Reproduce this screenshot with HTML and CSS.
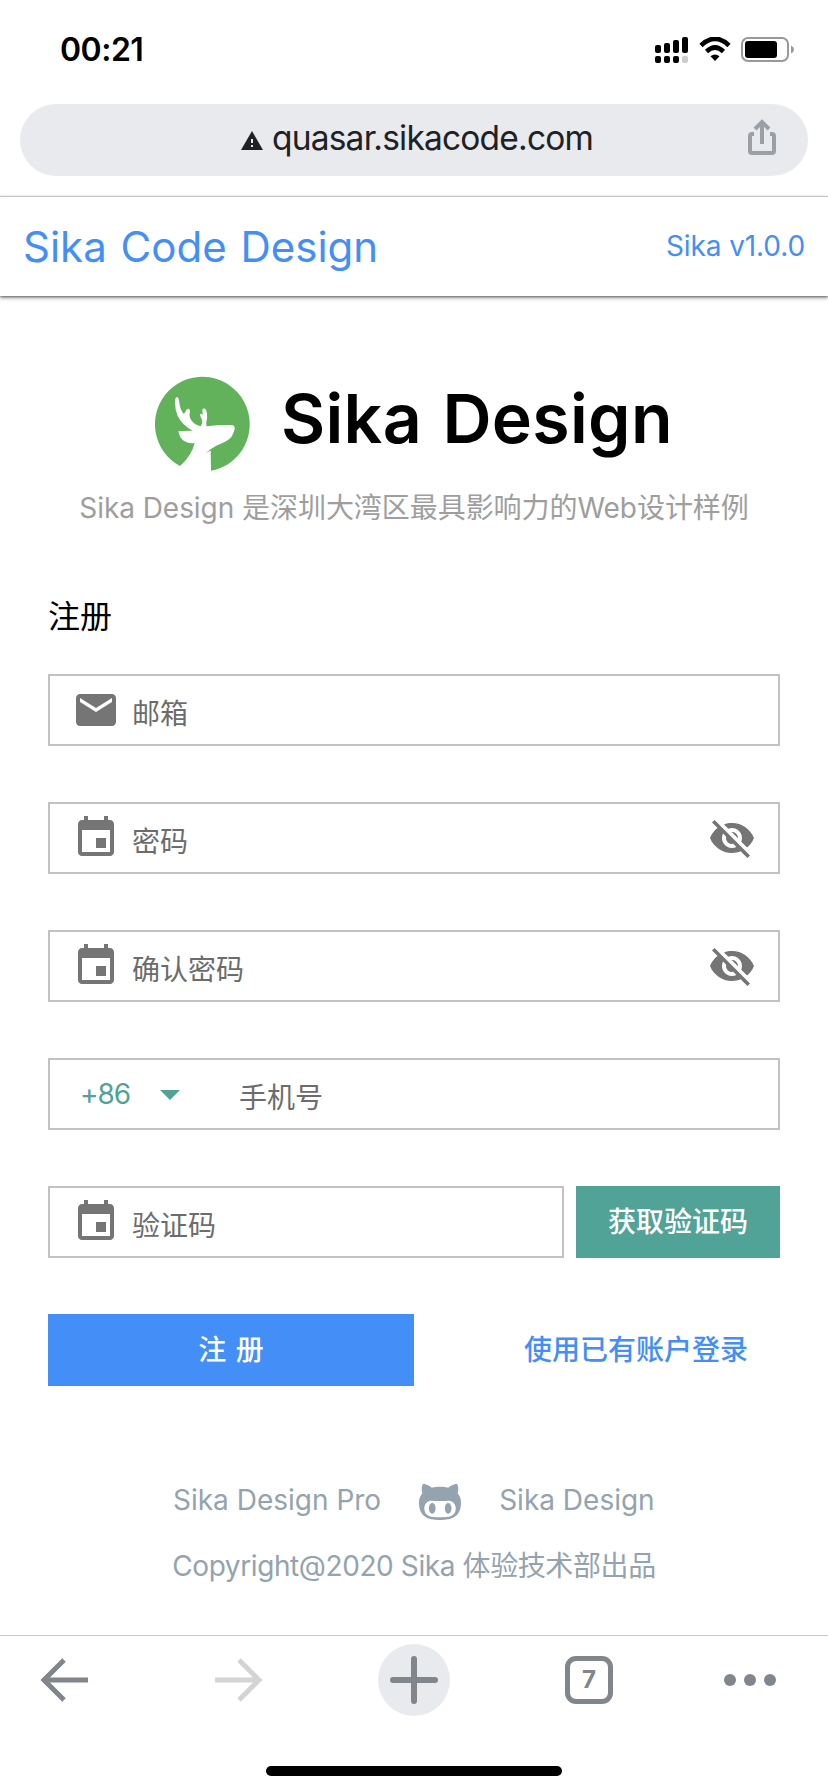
FILE: index.html
```html
<!DOCTYPE html>
<html lang="zh-CN">
<head>
<meta charset="utf-8">
<title>Sika Design</title>
<link rel="stylesheet" href="styles.css">
</head>
<body>
<svg class="defs" width="0" height="0">
  <symbol id="event" viewBox="0 0 24 24"><path d="M17 12h-5v5h5v-5zM16 1v2H8V1H6v2H5c-1.11 0-1.99.9-1.99 2L3 19c0 1.100.89 2 2 2h14c1.100 0 2-.9 2-2V5c0-1.100-.9-2-2-2h-1V1h-2zm3 18H5V8h14v11z"/></symbol>
  <symbol id="eye-off" viewBox="0 0 24 24"><path d="M12 7c2.76 0 5 2.24 5 5 0 .65-.13 1.26-.36 1.83l2.92 2.92c1.51-1.26 2.7-2.89 3.43-4.75-1.73-4.39-6-7.5-11-7.5-1.4 0-2.74.25-3.98.7l2.16 2.16C10.74 7.13 11.35 7 12 7zM2 4.27l2.28 2.28.46.46C3.08 8.3 1.78 10.02 1 12c1.73 4.39 6 7.5 11 7.5 1.55 0 3.03-.3 4.38-.84l.42.42L19.73 22 21 20.73 3.27 3 2 4.27zM7.53 9.8l1.55 1.55c-.05.21-.08.43-.08.65 0 1.66 1.34 3 3 3 .22 0 .44-.03.65-.08l1.55 1.55c-.67.33-1.41.53-2.2.53-2.76 0-5-2.24-5-5 0-.79.2-1.53.53-2.2zm4.31-.78l3.15 3.15.02-.16c0-1.66-1.34-3-3-3l-.17.01z"/></symbol>
</svg>

<div class="status">
  <span class="time">00:21</span>
  <div class="status-icons">
    <svg width="33" height="26" viewBox="0 0 33 26">
      <rect y="8" width="6" height="8" rx="2"/><rect x="9" y="6" width="6" height="10" rx="2"/><rect x="18" y="3" width="6" height="13" rx="2"/><rect x="27" width="6" height="16" rx="2"/>
      <rect y="19" width="6" height="7" rx="2"/><rect x="9" y="19" width="6" height="7" rx="2"/><rect x="18" y="19" width="6" height="7" rx="2"/><rect x="27" y="19" width="6" height="7" rx="2" fill="#ccc"/>
    </svg>
    <svg class="wifi" width="32" height="25" viewBox="0 0 32 25">
      <path d="M2 8.5Q16-5 30 8.500M7.500 14.500Q16 6.500 24.500 14.500" fill="none" stroke="#000" stroke-width="4.600"/>
      <path d="M16 24l-4.500-4.800q4.500-3.600 9 0z"/>
    </svg>
    <svg class="battery" width="53" height="25" viewBox="0 0 53 25">
      <rect x="1" y="1" width="46" height="23" rx="6" fill="#fff" stroke="#999" stroke-width="2"/>
      <rect x="4" y="4" width="32" height="17" rx="3"/><path d="M50 8.500q3 1.500 3 4t-3 4z" fill="#999"/>
    </svg>
  </div>
</div>

<div class="address">
  <div class="pill">
    <svg class="warn" width="22" height="19" viewBox="0 0 22 19"><path d="M11 0l11 19H0z" fill="#202124"/><path d="M10 8h2v4h-2zM10 14h2v2h-2z" fill="#e8eaed"/></svg>
    <span class="url">quasar.sikacode.com</span>
    <svg class="share" width="28" height="37" viewBox="0 0 28 37"><path d="M6 15H4a2 2 0 0 0-2 2v15a2 2 0 0 0 2 2h20a2 2 0 0 0 2-2V17a2 2 0 0 0-2-2h-2M14 25V4M7 10l7-7 7 7" fill="none" stroke="#9aa0a6" stroke-width="4"/></svg>
  </div>
</div>

<header class="toolbar">
  <span class="brand">Sika Code Design</span>
  <span class="version">Sika v1.0.0</span>
</header>

<main class="page">
  <div class="hero">
    <svg class="logo" width="96" height="96" viewBox="0 0 96 96">
      <path d="M25 90A47.400 47.400 0 1 1 56 94.800L55.700 74.500L51 77Q55 73 61.700 69.500Q72 65.500 76 61.500Q79.500 56 79.700 52Q79.500 49.500 77.500 49Q64 48.500 51.500 50.300Q50.800 46 52 43Q52.500 34.500 50 32.700Q48 31.800 47.300 33.700L47.800 39Q46.300 37 45 38.300Q45 40 46.800 43.500Q48 48 45.700 50.300Q39 48.500 36.500 44.500Q34.200 41 34.500 38.500Q35.800 33.500 33.700 32.700Q31.500 32.500 30 36.500L28.300 37.700Q25 33 24.500 28Q24 21 22 21Q20 21.500 20 26Q20 34 22.700 40Q27 49 37.700 54.700Q30 54.500 23.300 55.300Q25.500 65.500 33 66.700Q36 67.500 39.700 67Q36.500 80 25 90Z" fill="#61b25a"/>
    </svg>
    <h1 class="title">Sika Design</h1>
  </div>
  <p class="subtitle">Sika Design 是深圳大湾区最具影响力的Web设计样例</p>

  <form class="form">
    <h2 class="form-title">注册</h2>
    <div class="field"><svg class="icon" viewBox="0 0 24 24"><path d="M20 4H4c-1.100 0-1.990.9-1.990 2L2 18c0 1.100.9 2 2 2h16c1.100 0 2-.9 2-2V6c0-1.100-.9-2-2-2zm0 4l-8 5-8-5V6l8 5 8-5v2z"/></svg><span class="label">邮箱</span></div>
    <div class="field"><svg class="icon"><use href="#event"/></svg><span class="label">密码</span><svg class="icon eye"><use href="#eye-off"/></svg></div>
    <div class="field"><svg class="icon"><use href="#event"/></svg><span class="label">确认密码</span><svg class="icon eye"><use href="#eye-off"/></svg></div>
    <div class="field"><span class="prefix">+86</span><svg class="caret" width="20" height="10" viewBox="0 0 20 10"><path d="M0 0h20L10 10z"/></svg><span class="label">手机号</span></div>
    <div class="row">
      <div class="field code"><svg class="icon"><use href="#event"/></svg><span class="label">验证码</span></div>
      <button type="button" class="btn teal">获取验证码</button>
    </div>
    <div class="row actions">
      <button type="button" class="btn primary">注 册</button>
      <a class="login">使用已有账户登录</a>
    </div>
  </form>

  <footer class="footer">
    <div class="links">
      <span class="pro">Sika Design Pro</span>
      <svg class="github" width="42" height="36" viewBox="2 4.340 20 16.280" preserveAspectRatio="none"><path d="M20.380 8.530C20.540 8.130 21.060 6.540 20.210 4.390C20.210 4.390 18.900 4 15.910 6C14.660 5.670 13.330 5.620 12 5.620C10.680 5.620 9.340 5.670 8.090 6C5.100 3.970 3.790 4.390 3.790 4.390C2.940 6.540 3.460 8.130 3.630 8.530C2.610 9.620 2 11 2 12.720C2 19.160 6.160 20.610 12 20.610C17.790 20.610 22 19.160 22 12.720C22 11 21.390 9.620 20.380 8.530M12 19.380C7.880 19.380 4.530 19.190 4.530 15.190C4.530 14.240 5 13.340 5.800 12.610C7.140 11.380 9.430 12.030 12 12.030C14.590 12.030 16.850 11.380 18.200 12.610C19 13.340 19.500 14.230 19.500 15.190C19.500 19.180 16.130 19.380 12 19.380M8.300 12.900C7.400 12.900 6.700 14 6.700 15.340C6.700 16.700 7.400 17.800 8.300 17.800C9.200 17.800 9.900 16.700 9.900 15.340C9.900 14 9.200 12.900 8.300 12.900M15.900 12.900C15 12.900 14.300 14 14.300 15.340C14.300 16.700 15 17.800 15.900 17.800C16.800 17.800 17.500 16.700 17.500 15.340C17.500 14 16.800 12.900 15.900 12.900Z"/></svg>
      <span class="pro">Sika Design</span>
    </div>
    <div class="copyright">Copyright@2020 Sika 体验技术部出品</div>
  </footer>
</main>

<nav class="bottom">
  <div class="nav-row">
    <svg width="48" height="44" viewBox="0 0 48 44"><path d="M48 22H4M24 2L4 22l20 20" fill="none" stroke="#80868b" stroke-width="5"/></svg>
    <svg class="forward" width="48" height="44" viewBox="0 0 48 44"><path d="M0 22h44M24 2l20 20-20 20" fill="none" stroke="#d4d4d4" stroke-width="5"/></svg>
    <div class="plus"><svg width="48" height="48" viewBox="0 0 48 48"><path d="M3 24h42M24 3v42" stroke="#80868b" stroke-width="6" stroke-linecap="round"/></svg></div>
    <div class="tabs">7</div>
    <svg class="more" width="52" height="12" viewBox="0 0 52 12" fill="#80868b"><circle cx="6" cy="6" r="6"/><circle cx="26" cy="6" r="6"/><circle cx="46" cy="6" r="6"/></svg>
  </div>
  <div class="home"></div>
</nav>
</body>
</html>
```
FILE: styles.css
```css
* { box-sizing: border-box; }
body {
  margin: 0;
  width: 828px;
  height: 1792px;
  display: flex;
  flex-direction: column;
  background: #fff;
  color: #000;
  font-family: Inter, "Noto Sans CJK SC", sans-serif;
  overflow: hidden;
}
svg { display: block; flex: none; }
.defs { position: absolute; }
span, a, h1, h2, p { white-space: nowrap; }

.status { height: 104px; flex: none; display: flex; justify-content: space-between; align-items: flex-start; padding: 0 34px 0 60px; }
.time { margin-top: 30px; font-size: 32px; line-height: 40px; font-weight: 600; letter-spacing: -0.5px; }
.status-icons { display: flex; margin-top: 37px; }
.wifi { margin-left: 11px; }
.battery { margin-left: 10px; }

.address { height: 92px; flex: none; padding: 0 20px; }
.pill { height: 72px; border-radius: 36px; background: #e8eaed; display: flex; align-items: flex-start; padding-left: 221px; padding-right: 32px; }
.warn { margin-top: 27px; }
.url { margin: 14px 0 0 9px; font-size: 33.5px; line-height: 40px; letter-spacing: -0.8px; color: #202124; }
.share { margin: 15px 0 0 auto; }

.toolbar { position: relative; height: 100px; flex: none; border-top: 1px solid #c6c7c9; display: flex; align-items: center; justify-content: space-between; padding: 0 23px; color: #448ef7; box-shadow: 0 2px 4px rgba(0,0,0,.35), 0 1px 2px rgba(0,0,0,.4); }
.brand { font-size: 42px; line-height: 50px; word-spacing: 2px; }
.version { margin-bottom: 2px; font-size: 28px; line-height: 36px; letter-spacing: -0.1px; }

.page { height: 1339px; flex: none; padding: 80px 48px 0; }
.hero { display: flex; padding-left: 107px; }
.title { margin: 0 0 0 30px; font-size: 68px; line-height: 84px; font-weight: 600; letter-spacing: 0.3px; word-spacing: 3px; }
.subtitle { margin: 15px 0 0; text-align: center; font-size: 28px; line-height: 42px; letter-spacing: -0.05px; color: #9e9e9e; }
.form-title { margin: 64px 0 33px; font-size: 32px; line-height: 48px; font-weight: 400; }
.field { height: 72px; border: 2px solid #c2c2c2; display: flex; align-items: flex-start; padding: 0 22px; margin-bottom: 56px; color: #6c6c6c; }
.icon { width: 48px; height: 48px; margin-top: 10px; fill: #757575; }
.label { margin: 18px 0 0 12px; font-size: 28px; line-height: 40px; }
.eye { margin: 10px 0 0 auto; }
.prefix { width: 80px; margin: 14px 0 0 8px; font-size: 28px; line-height: 40px; letter-spacing: -1px; color: #51a297; }
.caret { margin: 30px 47px 0 0; fill: #51a297; }
.row { display: flex; justify-content: space-between; }
.code { width: 516px; }
.btn { height: 72px; padding: 0; border: 0; color: #fff; font: 500 28px/40px Inter, "Noto Sans CJK SC", sans-serif; }
.teal { width: 204px; background: #51a297; }
.primary { width: 366px; background: #448ef7; word-spacing: 2px; }
.login { margin: 16px 32px 0 0; font-size: 28px; line-height: 40px; font-weight: 500; color: #448ef7; }

.footer { margin-top: 94px; color: #94a3af; font-size: 28px; line-height: 40px; }
.links { display: flex; padding-left: 125px; }
.github { margin: 4px 38px 0; fill: #94a3af; }
.copyright { margin-top: 26px; text-align: center; letter-spacing: -0.4px; }

.bottom { flex: 1; border-top: 1px solid #c6c7c9; display: flex; flex-direction: column; align-items: center; }
.nav-row { width: 100%; height: 88px; padding: 0 52px 0 40px; display: flex; align-items: center; gap: 115px; }
.forward { margin-left: 12px; }
.more { margin-left: -4px; }
.plus { width: 72px; height: 72px; border-radius: 50%; background: #e8eaed; display: grid; place-items: center; }
.tabs { width: 48px; height: 48px; border: 5px solid #80868b; border-radius: 11px; color: #80868b; display: grid; place-items: center; font: 700 24px/24px Inter, sans-serif; }
.home { width: 296px; height: 10px; margin-top: 42px; border-radius: 5px; background: #000; }
```
